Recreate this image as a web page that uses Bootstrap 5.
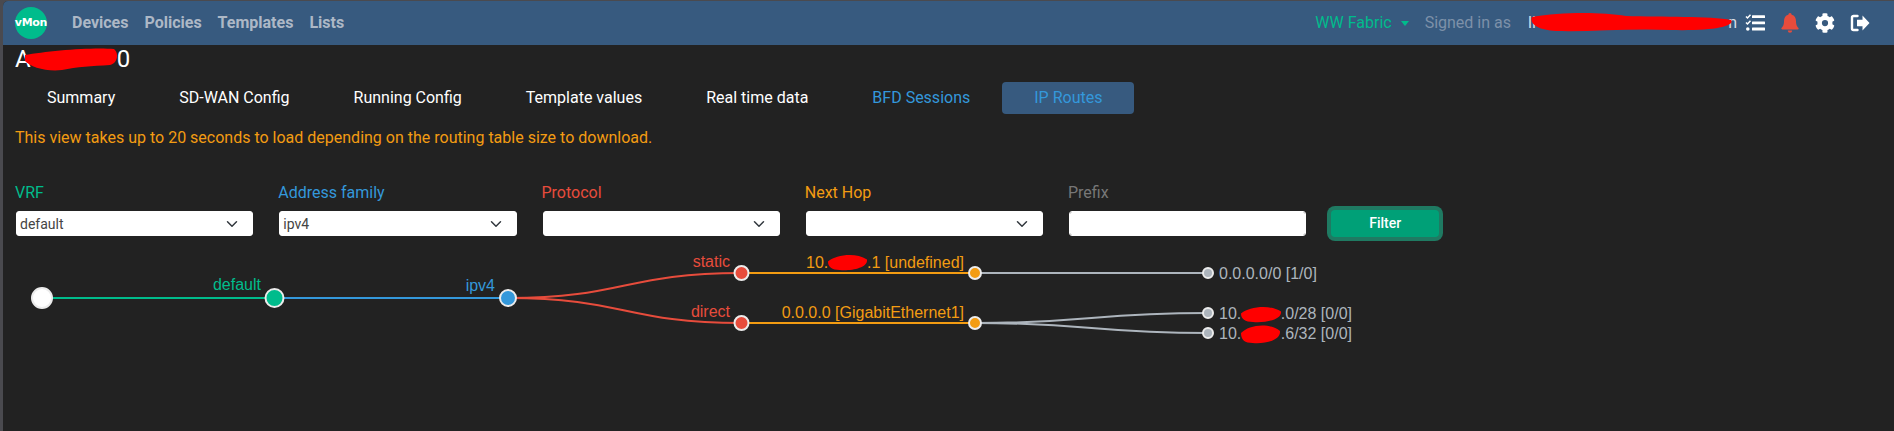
<!DOCTYPE html>
<html lang="en">
<head>
  <meta charset="UTF-8">
  <title>vMon - IP Routes</title>
  <link href="https://cdn.jsdelivr.net/npm/bootstrap@5.3.0/dist/css/bootstrap.min.css" rel="stylesheet">
  <style>
    html, body { height: 100%; }
    body {
      background-color: #4a4a4f;
      font-family: Roboto, "Liberation Sans", sans-serif;
      font-size: 16px;
      padding: 1px 0 0 3px;
      overflow: hidden;
    }
    .app-shell {
      background-color: #222;
      height: 100%;
      border-top-left-radius: 5px;
      overflow: hidden;
      color: #fff;
    }
    .top-bar {
      height: 44px;
      background-color: #375a7f;
      padding: 0 24px 0 12px;
    }
    .logo-dot {
      width: 32px;
      height: 32px;
      flex: none;
      border-radius: 50%;
      background-color: #00bc8c;
      color: #fff;
      font-family: "DejaVu Sans", sans-serif;
      font-size: 11px;
      font-weight: 700;
      letter-spacing: -.3px;
      margin-right: 25px;
    }
    .top-link {
      color: #adb8c6;
      font-size: 16px;
      font-weight: 700;
      margin-right: 16px;
      text-decoration: none;
    }
    .fabric-pick { color: #00bc8c; margin-right: 16px; }
    .fabric-caret {
      display: inline-block;
      border-top: 5px solid #00bc8c;
      border-left: 4px solid transparent;
      border-right: 4px solid transparent;
      margin-left: 9px;
      vertical-align: middle;
    }
    .signed-label { color: #7d91a9; margin-right: 17px; }
    .user-mail {
      width: 209px;
      height: 24px;
      color: #d8dee6;
      line-height: 24px;
      position: relative;
      margin-right: -7px;
    }
    .user-mail .mail-end { position: absolute; right: 0; top: 0; }
    .mail-blot { position: absolute; left: 3px; top: 0; }
    .bar-icon { width: 20px; height: 20px; margin-left: 15px; display: block; flex: none; }
    .page-title {
      font-size: 24px;
      line-height: 29px;
      margin: 0 0 0 12px;
      position: relative;
      display: flex;
    }
    .title-gap { width: 86px; }
    .title-blot { position: absolute; left: 7px; top: 2px; }
    .tab-row { margin: 8px 0 0 0; padding-left: 12px; }
    .tab-link {
      color: #fff;
      line-height: 24px;
      padding: 4px 32px;
      border-radius: 4px;
      text-decoration: none;
    }
    .tab-link.tab-blue { color: #3498db; }
    .tab-link.tab-on { background-color: #375a7f; color: #3498db; }
    .load-note { color: #f39c12; line-height: 24px; margin: 12px 0 0 12px; }
    .filter-row { margin: 31px 0 0 13px; gap: 26px; align-items: flex-end; }
    .filter-col { width: 237.250px; }
    .filter-col label { line-height: 24px; display: block; margin-bottom: 6px; margin-left: -1px; }
    .filter-col .form-select, .filter-col .form-control {
      height: 25px;
      min-height: 25px;
      font-size: 14px;
      line-height: 20px;
      padding: 0 24px 0 3px;
      border: 1px solid #fff;
      border-radius: 3px;
      color: #444;
      background-color: #fff;
    }
    .lbl-vrf { color: #00bc8c; }
    .lbl-af { color: #3498db; }
    .lbl-proto { color: #e74c3c; }
    .lbl-hop { color: #f39c12; }
    .lbl-prefix { color: #777; }
    .filter-btn {
      width: 108px;
      height: 27px;
      padding: 0;
      margin: 0 0 -1px -1px;
      font-size: 14px;
      font-weight: 500;
      color: #fff;
      background-color: #00a077;
      border: 0;
      border-radius: 4px;
      box-shadow: 0 0 0 4px #1f7a62;
    }
    .route-tree { display: block; margin-top: 4px; }
    .route-tree text { font-family: "Liberation Sans", Arial, sans-serif; font-size: 16px; }
  </style>
</head>
<body>

<div class="app-shell">
  <nav class="top-bar d-flex align-items-center">
    <div class="logo-dot d-flex align-items-center justify-content-center">vMon</div>
    <a class="top-link" href="#">Devices</a>
    <a class="top-link" href="#">Policies</a>
    <a class="top-link" href="#">Templates</a>
    <a class="top-link" href="#">Lists</a>
    <div class="ms-auto d-flex align-items-center">
      <div class="fabric-pick">WW Fabric<span class="fabric-caret"></span></div>
      <div class="signed-label">Signed in as</div>
      <div class="user-mail">
        <span>li</span><span class="mail-end">n</span>
        <svg class="mail-blot" width="204" height="22" viewBox="0 0 204 22"><path d="M1 6 C30 1 70 1 95 5 C130 6 180 5 200 9 C204 15 185 20 140 19 C100 17 60 21 25 20 C6 19 -2 12 1 6Z" fill="#f00"/></svg>
      </div>
      <svg class="bar-icon" viewBox="0 0 20 20" fill="#fff"><path d="M1 3.500 2.500 5 5.500 1.800" fill="none" stroke="#fff" stroke-width="1.500"/><path d="M1 9.500 2.500 11 5.500 7.800" fill="none" stroke="#fff" stroke-width="1.500"/><circle cx="2.800" cy="16" r="1.800"/><rect x="7" y="2.300" width="13" height="2.800" rx=".5"/><rect x="7" y="8.400" width="13" height="2.800" rx=".5"/><rect x="7" y="14.600" width="13" height="2.800" rx=".5"/></svg>
      <svg class="bar-icon" viewBox="0 0 20 20" fill="#e74c3c"><path d="M10 0a1.600 1.600 0 0 1 1.600 1.700C14.700 2.400 16 5 16 8c0 4.500 1.300 5.500 2.500 7 .4.700 0 1.500-.8 1.500H2.300c-.8 0-1.200-.8-.8-1.500C2.700 13.500 4 12.500 4 8c0-3 1.300-5.600 4.400-6.300A1.600 1.600 0 0 1 10 0Z"/><path d="M7.800 17.500h4.400a2.200 2.200 0 0 1-4.400 0Z"/></svg>
      <svg class="bar-icon" viewBox="0 0 512 512" fill="#fff"><path fill-rule="evenodd" d="M487 316l-43-25a195 195 0 0 0 0-70l43-25c5-3 7-9 5-14-11-36-30-68-55-95-4-4-10-5-15-2l-43 25a192 192 0 0 0-60-35V25c0-6-4-11-9-12-37-8-75-8-110 0-6 1-10 6-10 12v50a198 198 0 0 0-60 35l-43-25c-5-3-11-2-15 2-25 27-44 59-55 95-2 5 0 11 5 14l43 25a195 195 0 0 0 0 70l-43 25c-5 3-7 9-5 14 11 36 30 68 55 95 4 4 10 5 15 2l43-25a192 192 0 0 0 60 35v50c0 6 4 11 10 12 37 8 75 8 110 0 5-1 9-6 9-12v-50a198 198 0 0 0 60-35l43 25c5 3 11 2 15-2 25-27 44-59 55-95 2-5 0-11-5-14ZM256 336a80 80 0 1 1 0-160 80 80 0 0 1 0 160Z"/></svg>
      <svg class="bar-icon" viewBox="0 0 20 20" fill="#fff"><path d="M12.500 2.500 19.500 10l-7 7.500v-4.300H7v-6.400h5.500Z"/><path d="M7.500 3H3.500A1.500 1.500 0 0 0 2 4.500v11A1.500 1.500 0 0 0 3.500 17h4" fill="none" stroke="#fff" stroke-width="2.400" stroke-linecap="round"/></svg>
    </div>
  </nav>

  <div class="page-title"><span>A</span><span class="title-gap"></span><span>0</span>
    <svg class="title-blot" width="95" height="24" viewBox="0 0 95 24"><path d="M3 8 C25 4 70 0 92 2 C97 6 96 16 88 18 C70 19 55 20 40 23 C25 25 8 20 3 14Z" fill="#f00"/></svg>
  </div>

  <div class="tab-row d-flex">
    <a class="tab-link" href="#">Summary</a>
    <a class="tab-link" href="#">SD-WAN Config</a>
    <a class="tab-link" href="#">Running Config</a>
    <a class="tab-link" href="#">Template values</a>
    <a class="tab-link" href="#">Real time data</a>
    <a class="tab-link tab-blue" href="#">BFD Sessions</a>
    <a class="tab-link tab-on" href="#">IP Routes</a>
  </div>

  <div class="load-note">This view takes up to 20 seconds to load depending on the routing table size to download.</div>

  <div class="filter-row d-flex">
    <div class="filter-col"><label class="lbl-vrf">VRF</label><select class="form-select"><option>default</option></select></div>
    <div class="filter-col"><label class="lbl-af">Address family</label><select class="form-select"><option>ipv4</option></select></div>
    <div class="filter-col"><label class="lbl-proto">Protocol</label><select class="form-select"><option></option></select></div>
    <div class="filter-col"><label class="lbl-hop">Next Hop</label><select class="form-select"><option></option></select></div>
    <div class="filter-col"><label class="lbl-prefix">Prefix</label><input class="form-control" type="text"></div>
    <button class="filter-btn btn" type="button">Filter</button>
  </div>

  <svg class="route-tree" width="1400" height="130"></svg>
</div>

<script>
// route tree from data, coordinates are page px, shifted to the svg origin
const svg = document.querySelector('.route-tree');
const NS = 'http://www.w3.org/2000/svg';
const box = svg.getBoundingClientRect();
const ox = box.left, oy = box.top;

function add(tag, attrs, txt) {
  const el = document.createElementNS(NS, tag);
  for (const k in attrs) el.setAttribute(k, attrs[k]);
  if (txt) el.textContent = txt;
  svg.appendChild(el);
}
function link(x1, y1, x2, y2, color) {
  const mx = (x1 + x2) / 2 - ox;
  add('path', { d: `M${x1 - ox} ${y1 - oy} C${mx} ${y1 - oy} ${mx} ${y2 - oy} ${x2 - ox} ${y2 - oy}`, fill: 'none', stroke: color, 'stroke-width': 2 });
}
function node(x, y, r, color) {
  add('circle', { cx: x - ox, cy: y - oy, r: r, fill: color, stroke: '#ececec', 'stroke-width': 2 });
}
function label(x, y, txt, color, anchor) {
  add('text', { x: x - ox, y: y - oy, fill: color, 'text-anchor': anchor || 'end' }, txt);
}
function blot(x, y, w, h) {
  // wobbly red marker stroke over masked parts of the address
  const x2 = x + w, y2 = y + h, my = y + h / 2;
  add('path', { d: `M${x - ox} ${my - oy} C${x + w * .2 - ox} ${y - oy + 2} ${x + w * .7 - ox} ${y - oy - 1} ${x2 - ox} ${my - oy - 2} C${x2 - ox + 1} ${y2 - oy - 2} ${x + w * .6 - ox} ${y2 - oy + 1} ${x + w * .3 - ox} ${y2 - oy} C${x + w * .1 - ox} ${y2 - oy} ${x - ox} ${y2 - oy - 3} ${x - ox} ${my - oy}Z`, fill: '#f00' });
}

const links = [
  [42, 298, 274.500, 298, '#00bc8c'],
  [274.500, 298, 508, 298, '#3498db'],
  [508, 298, 741.500, 273, '#e74c3c'],
  [508, 298, 741.500, 323, '#e74c3c'],
  [741.500, 273, 975, 273, '#f39c12'],
  [741.500, 323, 975, 323, '#f39c12'],
  [975, 273, 1208, 273, '#adb5bd'],
  [975, 323, 1208, 313, '#adb5bd'],
  [975, 323, 1208, 333, '#adb5bd']
];
links.forEach(l => link(...l));

const nodes = [
  [42, 298, 10, '#fff'],
  [274.500, 298, 9, '#00bc8c'],
  [508, 298, 8, '#3498db'],
  [741.500, 273, 7, '#e74c3c'],
  [741.500, 323, 7, '#e74c3c'],
  [975, 273, 6, '#f39c12'],
  [975, 323, 6, '#f39c12'],
  [1208, 273, 5, '#adb5bd'],
  [1208, 313, 5, '#adb5bd'],
  [1208, 333, 5, '#adb5bd']
];
nodes.forEach(n => node(...n));

label(261, 290, 'default', '#00bc8c');
label(495, 291, 'ipv4', '#3498db');
label(730, 267, 'static', '#e74c3c');
label(730, 317, 'direct', '#e74c3c');
label(806, 268, '10.', '#f39c12', 'start');
label(964, 268, '.1 [undefined]', '#f39c12');
label(964, 318, '0.0.0.0 [GigabitEthernet1]', '#f39c12');
label(1219, 279, '0.0.0.0/0 [1/0]', '#adb5bd', 'start');
label(1219, 319, '10.', '#adb5bd', 'start');
label(1352, 319, '.0/28 [0/0]', '#adb5bd');
label(1219, 339, '10.', '#adb5bd', 'start');
label(1352, 339, '.6/32 [0/0]', '#adb5bd');

blot(828, 253, 39, 17);
blot(1241, 305, 40, 17);
blot(1241, 323, 39, 20);
</script>

</body>
</html>
